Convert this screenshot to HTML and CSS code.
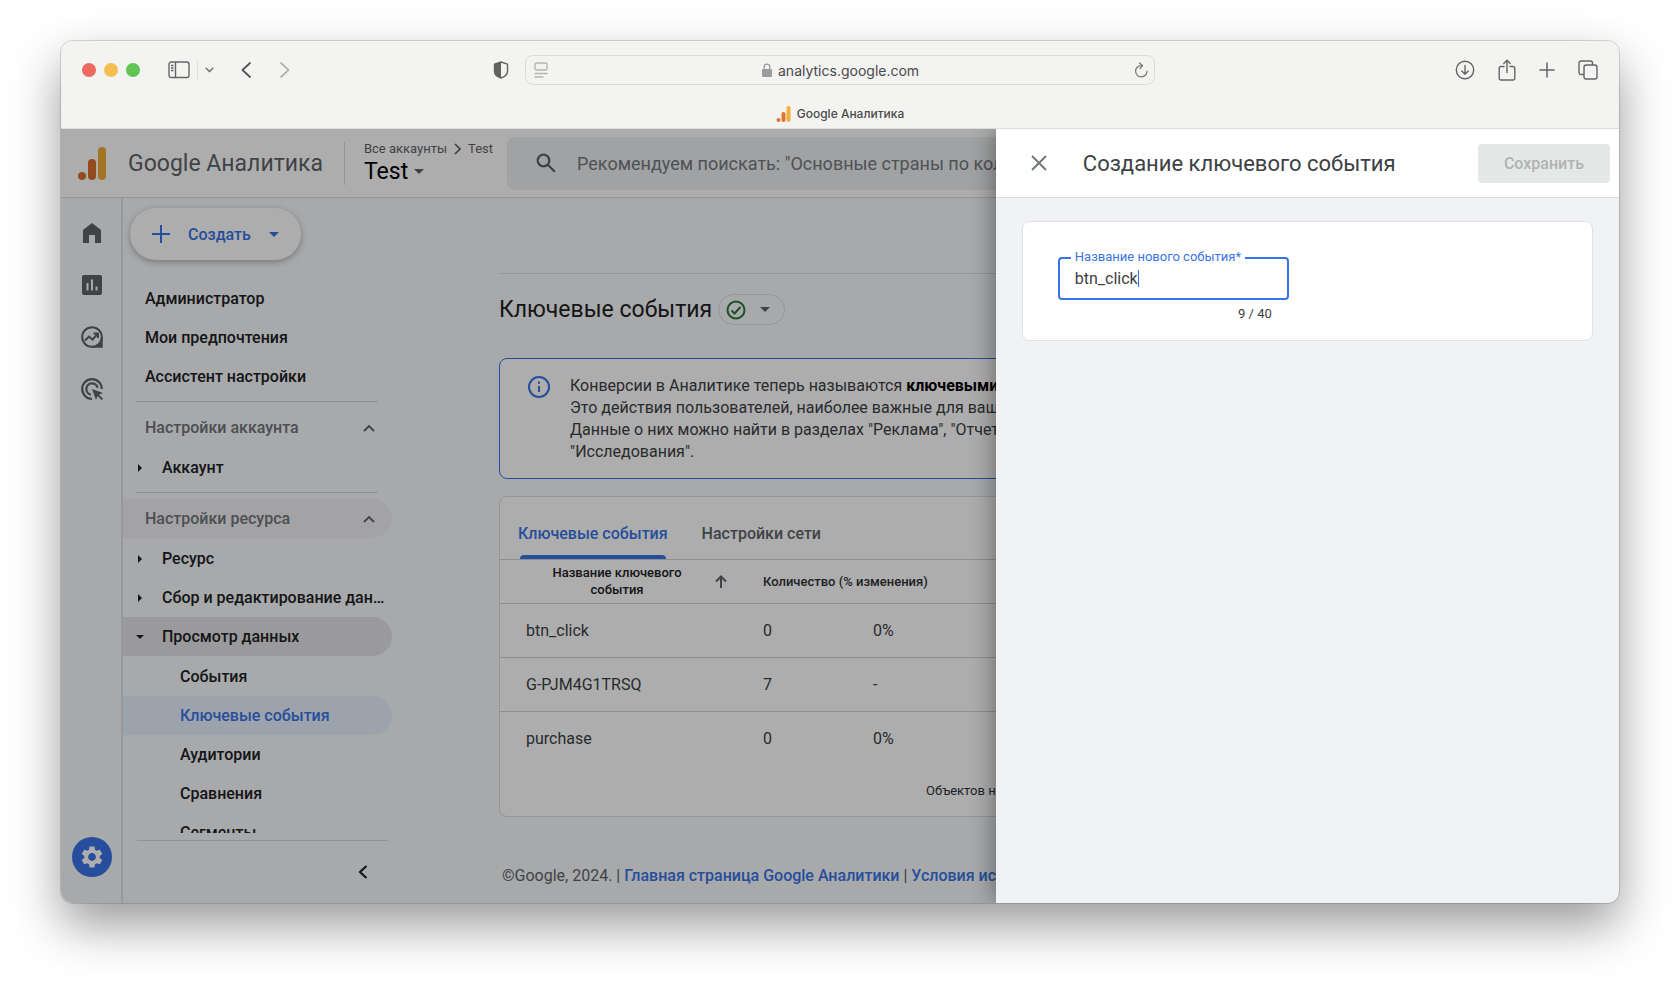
FILE: index.html
```
<!DOCTYPE html>
<html lang="ru">
<head>
    <meta charset="UTF-8">
    <meta name="viewport" content="width=device-width, initial-scale=1.0">
    <title>Google Аналитика</title>
    <link rel="stylesheet" href="styles.css">
</head>
<body>
    <div class="window">

        <!-- Browser toolbar -->
        <header class="browser">
            <div class="toolbar">
                <div class="toolbar-left">
                    <div class="lights">
                        <span class="light red"></span>
                        <span class="light yellow"></span>
                        <span class="light green"></span>
                    </div>
                    <button class="icon-btn" aria-label="Боковая панель">
                        <svg width="22" height="18" viewBox="0 0 22 18" fill="none" stroke="#656565" stroke-width="1.4"><rect x="1" y="1" width="20" height="15.5" rx="2.2"/><path d="M7.5 1v15.5M3 4.5h2.5M3 7h2.5M3 9.500h2.500" /></svg>
                    </button>
                    <span class="toolbar-sep"></span>
                    <button class="icon-btn chev" aria-label="Группы вкладок">
                        <svg width="9" height="6" viewBox="0 0 9 6" fill="none" stroke="#7a7a7a" stroke-width="1.6" stroke-linecap="round"><path d="M1.200 1.200l3.300 3.300 3.300-3.300"/></svg>
                    </button>
                    <button class="icon-btn back" aria-label="Назад">
                        <svg width="10" height="16" viewBox="0 0 10 16" fill="none" stroke="#555" stroke-width="1.8" stroke-linecap="round" stroke-linejoin="round"><path d="M9 1L1.500 8 9 15"/></svg>
                    </button>
                    <button class="icon-btn forward" aria-label="Вперед">
                        <svg width="10" height="16" viewBox="0 0 10 16" fill="none" stroke="#b4b4b2" stroke-width="1.8" stroke-linecap="round" stroke-linejoin="round"><path d="M1 1l7.500 7L1 15"/></svg>
                    </button>
                    <button class="icon-btn shield" aria-label="Конфиденциальность">
                        <svg width="16" height="18" viewBox="0 0 16 18"><path d="M8 1l6.500 2.200v7C14.500 13.500 11.500 15.800 8 17c-3.500-1.200-6.500-3.500-6.500-6.800v-7z" fill="none" stroke="#626260" stroke-width="1.400" stroke-linejoin="round"/><path d="M8 1v16c-3.500-1.200-6.500-3.500-6.500-6.800v-7z" fill="#626260"/></svg>
                    </button>
                </div>

                <div class="address">
                    <svg width="14" height="16" viewBox="0 0 14 16" fill="none" stroke="#b4b4b2" stroke-width="1.400" stroke-linecap="round"><rect x="1" y="1" width="12" height="7" rx="1.500"/><path d="M1 11.500h12M1 15h8"/></svg>
                    <div class="address-text">
                        <svg width="10" height="14" viewBox="0 0 10 14"><path d="M2.200 7V4a2.800 2.800 0 0 1 5.600 0v3" fill="none" stroke="#9b9b9b" stroke-width="1.300"/><rect y="6" width="10" height="8" rx="1.200" fill="#9b9b9b"/></svg>
                        <input type="text" class="address-input" value="analytics.google.com" aria-label="Адрес">
                    </div>
                    <button class="icon-btn" aria-label="Обновить">
                        <svg width="14" height="16" viewBox="0 0 14 16" fill="none" stroke="#777" stroke-width="1.200" stroke-linecap="round" stroke-linejoin="round"><path d="M7.500 3.500a5.700 5.700 0 1 0 5.500 5.700M5.500 1l3 2.500L6 6.500"/></svg>
                    </button>
                </div>

                <div class="toolbar-right">
                    <button class="icon-btn" aria-label="Загрузки">
                        <svg width="20" height="20" viewBox="0 0 20 20" fill="none" stroke="#656565" stroke-width="1.400" stroke-linecap="round" stroke-linejoin="round"><circle cx="10" cy="10" r="8.700"/><path d="M10 5.500v8.500M6.800 11l3.200 3.200 3.200-3.200"/></svg>
                    </button>
                    <button class="icon-btn" aria-label="Поделиться">
                        <svg width="18" height="22" viewBox="0 0 18 22" fill="none" stroke="#656565" stroke-width="1.400" stroke-linecap="round" stroke-linejoin="round"><path d="M6 7.500H3A1.800 1.800 0 0 0 1.200 9.300v9.900A1.800 1.800 0 0 0 3 21h12a1.800 1.800 0 0 0 1.800-1.800V9.300A1.800 1.800 0 0 0 15 7.500h-3M9 13.500V1.500M5.800 4.500L9 1.300l3.200 3.200"/></svg>
                    </button>
                    <button class="icon-btn" aria-label="Новая вкладка">
                        <svg width="16" height="16" viewBox="0 0 16 16" fill="none" stroke="#656565" stroke-width="1.500" stroke-linecap="round"><path d="M8 1v14M1 8h14"/></svg>
                    </button>
                    <button class="icon-btn" aria-label="Обзор вкладок">
                        <svg width="20" height="20" viewBox="0 0 20 20" fill="none" stroke="#656565" stroke-width="1.400"><rect x="6" y="5" width="13" height="14" rx="2.200"/><path d="M6 14.500H3A2 2 0 0 1 1 12.500V3a2 2 0 0 1 2-2h9.500a2 2 0 0 1 2 2v2"/></svg>
                    </button>
                </div>
            </div>
            <div class="tab-bar">
                <svg width="15" height="16" viewBox="0 0 28 32"><rect x="20" width="8" height="32" rx="4" fill="#f2b03d"/><rect x="10" y="12" width="8" height="20" rx="4" fill="#dd7633"/><circle cx="4" cy="28" r="4" fill="#dd7633"/></svg>
                <span>Google Аналитика</span>
            </div>
        </header>

        <div class="app">
            <header class="app-header">
                <svg class="logo" width="28" height="33" viewBox="0 0 28 33"><rect x="20" width="8" height="33" rx="4" fill="#f2ab36"/><rect x="10" y="12" width="8" height="21" rx="4" fill="#d9702c"/><circle cx="4" cy="29" r="4" fill="#d9702c"/></svg>
                <span class="brand">Google Аналитика</span>
                <div class="account">
                    <div class="crumbs">
                        <span>Все аккаунты</span>
                        <svg width="7" height="12" viewBox="0 0 7 12" fill="none" stroke="#5f6368" stroke-width="1.700"><path d="M1 1l5 5-5 5"/></svg>
                        <span>Test</span>
                    </div>
                    <button class="account-btn">Test <span class="caret"></span></button>
                </div>
                <label class="search">
                    <svg width="20" height="20" viewBox="0 0 20 20" fill="none" stroke="#5f6368" stroke-width="2.300"><circle cx="7.500" cy="7.500" r="5.800"/><path d="M11.800 11.800l7 7"/></svg>
                    <input type="text" aria-label="Поиск" placeholder="Рекомендуем поискать: &quot;Основные страны по количеству пользователей&quot;">
                </label>
            </header>

            <div class="app-body">
                <nav class="rail">
                    <a href="#" aria-label="Главная"><svg width="18" height="20" viewBox="0 0 18 20"><path d="M0 20V7l9-7 9 7v13h-6v-8H6v8z" fill="#5f6368"/></svg></a>
                    <a href="#" aria-label="Отчеты"><svg width="20" height="20" viewBox="0 0 20 20"><rect width="20" height="20" rx="2" fill="#5f6368"/><path d="M5.500 8v7.500M10 4.500v11M14.500 11.500v4" stroke="#f7f9fb" stroke-width="2"/></svg></a>
                    <a href="#" aria-label="Исследования"><svg width="22" height="22" viewBox="0 0 22 22" fill="none" stroke="#5f6368" stroke-width="2"><circle cx="11" cy="11" r="9.800"/><path d="M4 14.500l4-4 3.500 3 5-5.500M12.500 7.500H17V12"/><path d="M21 11v10H11c5.500 0 10-4.500 10-10z" fill="#5f6368" stroke-width="1.500"/></svg></a>
                    <a href="#" aria-label="Реклама"><svg width="22" height="22" viewBox="0 0 22 22" fill="none" stroke="#5f6368" stroke-width="2.200"><path d="M20.800 11A9.800 9.800 0 1 0 11 20.800M16.600 9.800A5.700 5.700 0 1 0 9.800 16.600"/><path d="M11 11l11 4-4 1.700 4 4-1.400 1.400-4-4L15 22z" fill="#5f6368" stroke="none"/></svg></a>
                    <a href="#" class="rail-settings" aria-label="Администратор"><svg width="26" height="26" viewBox="0 0 24 24" fill="#fff"><path d="M19.140 12.940c.04-.3.060-.61.060-.94 0-.32-.02-.64-.07-.94l2.030-1.580c.18-.14.23-.41.12-.61l-1.920-3.320c-.12-.22-.37-.29-.59-.22l-2.390.96c-.5-.38-1.030-.7-1.620-.94l-.36-2.540c-.04-.24-.24-.41-.48-.41h-3.840c-.24 0-.43.17-.47.41l-.36 2.540c-.59.24-1.130.57-1.620.94l-2.390-.96c-.22-.08-.47 0-.59.22L2.740 8.870c-.12.21-.08.47.12.61l2.030 1.580c-.05.3-.09.63-.09.94s.02.64.07.94l-2.030 1.580c-.18.14-.23.41-.12.61l1.920 3.320c.12.22.37.29.59.22l2.390-.96c.5.38 1.030.7 1.620.94l.36 2.540c.05.24.24.41.48.41h3.840c.24 0 .44-.17.47-.41l.36-2.540c.59-.24 1.130-.56 1.620-.94l2.390.96c.22.08.47 0 .59-.22l1.920-3.320c.12-.22.07-.47-.12-.61l-2.010-1.580zM12 15.600c-1.980 0-3.600-1.620-3.600-3.600s1.620-3.600 3.600-3.600 3.600 1.620 3.600 3.600-1.620 3.600-3.600 3.600z"/></svg></a>
                </nav>

                <aside class="sidebar">
                    <button class="create-btn">
                        <svg width="18" height="18" viewBox="0 0 18 18" stroke="#3974e6" stroke-width="2"><path d="M9 0v18M0 9h18"/></svg>
                        Создать
                        <span class="caret"></span>
                    </button>
                    <div class="menu">
                        <a href="#" class="row">Администратор</a>
                        <a href="#" class="row">Мои предпочтения</a>
                        <a href="#" class="row">Ассистент настройки</a>
                        <hr>
                        <button class="row row-head">Настройки аккаунта <svg width="12" height="8" viewBox="0 0 12 8" fill="none" stroke="#5f6368" stroke-width="1.800"><path d="M1 7l5-5 5 5"/></svg></button>
                        <a href="#" class="row row-group"><span class="arrow"></span><span class="row-text">Аккаунт</span></a>
                        <hr>
                        <button class="row row-head shaded">Настройки ресурса <svg width="12" height="8" viewBox="0 0 12 8" fill="none" stroke="#5f6368" stroke-width="1.800"><path d="M1 7l5-5 5 5"/></svg></button>
                        <a href="#" class="row row-group"><span class="arrow"></span><span class="row-text">Ресурс</span></a>
                        <a href="#" class="row row-group"><span class="arrow"></span><span class="row-text">Сбор и редактирование данных</span></a>
                        <a href="#" class="row row-group open"><span class="arrow"></span><span class="row-text">Просмотр данных</span></a>
                        <div class="submenu">
                            <a href="#" class="row">События</a>
                            <a href="#" class="row active">Ключевые события</a>
                            <a href="#" class="row">Аудитории</a>
                            <a href="#" class="row">Сравнения</a>
                            <a href="#" class="row">Сегменты</a>
                        </div>
                    </div>
                    <div class="sidebar-footer">
                        <button class="icon-btn" aria-label="Свернуть">
                            <svg width="10" height="14" viewBox="0 0 10 14" fill="none" stroke="#202124" stroke-width="2.200"><path d="M8.500 1L2 7l6.500 6"/></svg>
                        </button>
                    </div>
                </aside>

                <main class="content">
                    <div class="page-title">
                        <h1>Ключевые события</h1>
                        <button class="status-btn" aria-label="Статус">
                            <svg width="20" height="20" viewBox="0 0 20 20" fill="none" stroke="#2b773b" stroke-width="2"><circle cx="10" cy="10" r="8.500"/><path d="M5.500 10.500l3 3 6-6.500"/></svg>
                            <span class="caret"></span>
                        </button>
                    </div>

                    <div class="notice">
                        <svg width="24" height="24" viewBox="0 0 24 24" fill="none" stroke="#3974e6" stroke-width="2"><circle cx="12" cy="12" r="10"/><path d="M12 11v6M12 6.500v2.200"/></svg>
                        <p>Конверсии в Аналитике теперь называются <b>ключевыми событиями</b>.<br>
                        Это действия пользователей, наиболее важные для вашего бизнеса.<br>
                        Данные о них можно найти в разделах "Реклама", "Отчеты" и<br>
                        "Исследования".</p>
                    </div>

                    <section class="card">
                        <div class="tabs">
                            <button class="tab active">Ключевые события</button>
                            <button class="tab">Настройки сети</button>
                        </div>
                        <table>
                            <thead>
                                <tr>
                                    <th class="col-name">
                                        <div class="sort">
                                            <span>Название ключевого события</span>
                                            <svg width="12" height="13" viewBox="0 0 12 13" fill="none" stroke="#5f6368" stroke-width="2"><path d="M6 13V2M1 6.500l5-5 5 5"/></svg>
                                        </div>
                                    </th>
                                    <th colspan="2">Количество (% изменения)</th>
                                </tr>
                            </thead>
                            <tbody>
                                <tr><td>btn_click</td><td class="col-count">0</td><td>0%</td></tr>
                                <tr><td>G-PJM4G1TRSQ</td><td class="col-count">7</td><td>-</td></tr>
                                <tr><td>purchase</td><td class="col-count">0</td><td>0%</td></tr>
                            </tbody>
                        </table>
                        <div class="pager">Объектов на странице:</div>
                    </section>

                    <footer class="page-footer">
                        <span>©Google, 2024.</span> | <a href="#">Главная страница Google Аналитики</a> | <a href="#">Условия использования</a>
                    </footer>
                </main>
            </div>

            <div class="scrim"></div>

            <!-- Side sheet -->
            <div class="drawer" role="dialog" aria-labelledby="drawerTitle">
                <div class="drawer-header">
                    <button class="icon-btn" aria-label="Закрыть">
                        <svg width="16" height="16" viewBox="0 0 16 16" fill="none" stroke="#747779" stroke-width="2"><path d="M1 1l14 14M15 1L1 15"/></svg>
                    </button>
                    <h2 id="drawerTitle">Создание ключевого события</h2>
                    <button class="save-btn" disabled>Сохранить</button>
                </div>
                <div class="drawer-body">
                    <div class="form-card">
                        <div class="field">
                            <label for="eventName">Название нового события*</label>
                            <input type="text" id="eventName" value="btn_click" maxlength="40">
                            <span class="cursor"></span>
                        </div>
                        <div class="counter">9 / 40</div>
                    </div>
                </div>
            </div>
        </div>
    </div>
</body>
</html>
```
FILE: styles.css
```
* {
    margin: 0;
    padding: 0;
    box-sizing: border-box;
}

body {
    height: 100vh;
    padding: 41px 61px 81px;
    background: #fff;
    font-family: Roboto, sans-serif;
    font-size: 16px;
    color: #3c4043;
    overflow: hidden;
}

button,
input {
    font: inherit;
    color: inherit;
    background: none;
    border: none;
    outline: none;
}

button {
    cursor: pointer;
}

a {
    color: inherit;
    text-decoration: none;
}

svg {
    display: block;
    flex-shrink: 0;
}

.window {
    height: 100%;
    display: flex;
    flex-direction: column;
    border-radius: 12px;
    overflow: hidden;
    box-shadow: 0 0 0 1px rgba(0, 0, 0, 0.14), 0 22px 50px rgba(0, 0, 0, 0.4);
}

.icon-btn {
    display: flex;
    align-items: center;
    justify-content: center;
}

.caret {
    display: inline-block;
    border: 5px solid transparent;
    border-top-color: currentColor;
    border-bottom: none;
}

/* Browser */
.browser {
    flex-shrink: 0;
    background: #f3f3f1;
    border-bottom: 1px solid #dcdcda;
    font-family: Inter, sans-serif;
    color: #4a4a4a;
}

.toolbar {
    height: 58px;
    display: grid;
    grid-template-columns: 1fr 630px 1fr;
    align-items: center;
}

.toolbar-left {
    display: flex;
    align-items: center;
    padding: 0 16px 0 21px;
}

.lights {
    display: flex;
    gap: 8px;
    margin-right: 28px;
}

.light {
    width: 14px;
    height: 14px;
    border-radius: 50%;
}

.red { background: #ed6a5e; }
.yellow { background: #f4bf4f; }
.green { background: #61c554; }

.toolbar-sep {
    width: 1px;
    height: 20px;
    margin: 0 7px;
    background: #e0e0de;
}

.back {
    margin-left: 27px;
}

.forward {
    margin-left: 29px;
}

.shield {
    margin-left: auto;
}

.address {
    height: 30px;
    display: flex;
    align-items: center;
    justify-content: space-between;
    padding: 0 6px 0 8px;
    border: 1px solid #dbdbd9;
    border-radius: 8px;
}

.address-text {
    display: flex;
    align-items: center;
    gap: 6px;
}

.address-input {
    width: 142px;
    font-size: 14px;
}

.toolbar-right {
    display: flex;
    align-items: center;
    justify-content: flex-end;
    gap: 23px;
    padding-right: 21px;
}

.tab-bar {
    height: 29px;
    display: flex;
    align-items: center;
    justify-content: center;
    gap: 6px;
    font-size: 12px;
    font-weight: 500;
}

/* App */
.app {
    position: relative;
    flex: 1;
    min-height: 0;
    display: flex;
    flex-direction: column;
    background: #f7f9fb;
}

.app-header {
    height: 69px;
    flex-shrink: 0;
    display: flex;
    align-items: center;
    padding-left: 17px;
    background: #fff;
    border-bottom: 1px solid #dadce0;
}

.brand {
    margin: 0 21px 0 22px;
    font-size: 23px;
    color: #5f6368;
    white-space: nowrap;
}

.account {
    padding-left: 19px;
    border-left: 1px solid #dadce0;
    margin-right: 14px;
    white-space: nowrap;
}

.crumbs {
    display: flex;
    align-items: center;
    gap: 7px;
    font-size: 13px;
    line-height: 14px;
    color: #5f6368;
}

.account-btn {
    display: flex;
    align-items: center;
    gap: 6px;
    margin-top: 3px;
    font-size: 23px;
    line-height: 26px;
    color: #000;
}

.account-btn .caret {
    color: #5f6368;
}

.search {
    flex: 1;
    height: 53px;
    display: flex;
    align-items: center;
    gap: 21px;
    padding-left: 29px;
    border-radius: 8px;
    background: #edeff1;
}

.search input {
    flex: 1;
    font-size: 18px;
    color: #5f6368;
}

.search input::placeholder {
    color: #75797e;
    opacity: 1;
}

.app-body {
    flex: 1;
    min-height: 0;
    display: flex;
}

.rail {
    width: 62px;
    flex-shrink: 0;
    display: flex;
    flex-direction: column;
    align-items: center;
    padding: 15px 0 26px 1px;
    gap: 12px;
    border-right: 2px solid #dfe1e4;
}

.rail a {
    width: 40px;
    height: 40px;
    display: flex;
    align-items: center;
    justify-content: center;
}

.rail .rail-settings {
    margin-top: auto;
    border-radius: 50%;
    background: #3974e6;
}

.sidebar {
    width: 269px;
    flex-shrink: 0;
    display: flex;
    flex-direction: column;
}

.create-btn {
    align-self: flex-start;
    flex-shrink: 0;
    height: 52px;
    display: flex;
    align-items: center;
    gap: 18px;
    margin: 10px 0 19px 7px;
    padding: 0 22px;
    border-radius: 26px;
    background: #fff;
    box-shadow: 0 2px 6px rgba(60, 64, 67, 0.4);
    font-weight: 500;
    color: #3974e6;
}

.menu {
    flex: 1;
    min-height: 0;
    overflow: hidden;
    font-weight: 500;
    color: #202124;
}

.menu hr {
    margin: 5px 14px 6px 13px;
    border: none;
    border-top: 1px solid #d6d8da;
}

.row {
    width: 100%;
    height: 39px;
    display: flex;
    align-items: center;
    padding-left: 22px;
    border-radius: 0 20px 20px 0;
    white-space: nowrap;
}

.row-head {
    justify-content: space-between;
    padding-right: 17px;
    margin-bottom: 1px;
    color: #70757a;
}

.shaded {
    background: #f0f1f3;
}

.row-group {
    padding: 0 5px 0 13px;
}

.row-text {
    overflow: hidden;
    text-overflow: ellipsis;
}

.arrow {
    width: 8px;
    margin-right: 18px;
    flex-shrink: 0;
}

.arrow::before {
    content: "";
    display: block;
    width: 0;
    margin-left: 2px;
    border: 4px solid transparent;
    border-left-color: #202124;
    border-right: none;
}

.open {
    background: #e3e4e6;
}

.open .arrow::before {
    margin-left: 0;
    border: 4px solid transparent;
    border-top-color: #202124;
    border-bottom: none;
}

.submenu {
    margin-top: 1px;
}

.submenu .row {
    padding-left: 57px;
}

.row.active {
    background: #e8f0fe;
    color: #3974e6;
}

.sidebar-footer {
    height: 63px;
    flex-shrink: 0;
    display: flex;
    align-items: center;
    justify-content: flex-end;
    margin: 7px 4px 0 14px;
    padding-right: 20px;
    border-top: 1px solid #d6d8da;
}

/* Content */
.content {
    flex: 1;
    padding: 75px 107px 0;
    white-space: nowrap;
}

.page-title {
    height: 72px;
    display: flex;
    align-items: center;
    gap: 6px;
    border-top: 1px solid #dadce0;
}

.page-title h1 {
    font-size: 23px;
    font-weight: 400;
    color: #202124;
}

.status-btn {
    height: 31px;
    display: flex;
    align-items: center;
    gap: 14px;
    padding: 0 14px 0 7px;
    border: 1px solid #dadce0;
    border-radius: 16px;
    color: #5f6368;
}

.notice {
    display: flex;
    gap: 19px;
    margin-top: 13px;
    padding: 16px 27px 15px;
    border: 1px solid #3974e6;
    border-radius: 8px;
    background: #fff;
}

.notice p {
    line-height: 22px;
}

.notice b {
    color: #000;
}

.card {
    margin-top: 17px;
    border: 1px solid #dadce0;
    border-radius: 8px;
    background: #fff;
}

.tabs {
    height: 63px;
    display: flex;
    padding-left: 18px;
    gap: 34px;
    border-bottom: 1px solid #d0d2d5;
}

.tab {
    position: relative;
    padding-top: 10px;
    font-weight: 500;
    color: #5f6368;
}

.tab.active {
    color: #3974e6;
}

.tab.active::after {
    content: "";
    position: absolute;
    left: 2px;
    right: 2px;
    bottom: 0;
    height: 4px;
    border-radius: 4px 4px 0 0;
    background: #3974e6;
}

table {
    width: 100%;
    border-collapse: collapse;
}

th {
    height: 43px;
    font-size: 13px;
    font-weight: 500;
    line-height: 17px;
    text-align: left;
    color: #303236;
}

td {
    height: 54px;
    border-top: 1px solid #d0d2d5;
}

td:first-child {
    padding-left: 26px;
}

.col-name {
    width: 263px;
    white-space: normal;
    color: #202124;
}

.col-count {
    width: 110px;
}

.sort {
    display: flex;
    align-items: center;
    justify-content: space-between;
    padding: 0 36px 0 45px;
}

.sort span {
    width: 144px;
    text-align: center;
}

.pager {
    padding: 17px 0 16px 426px;
    font-size: 13px;
    line-height: 18px;
    color: #303236;
}

.page-footer {
    margin-top: 48px;
    padding-left: 3px;
    line-height: 22px;
    color: #5f6368;
}

.page-footer a {
    font-weight: 500;
    color: #3974e6;
}

/* Drawer */
.scrim {
    position: absolute;
    inset: 0;
    background: rgba(0, 0, 0, 0.32);
}

.drawer {
    position: absolute;
    top: 0;
    right: 0;
    bottom: 0;
    width: 40%;
    display: flex;
    flex-direction: column;
    background: #f1f2f4;
    box-shadow: 0 0 24px rgba(0, 0, 0, 0.45);
    clip-path: inset(0 0 0 -40px);
}

.drawer-header {
    height: 69px;
    flex-shrink: 0;
    display: flex;
    align-items: center;
    padding: 0 9px 0 35px;
    background: #fff;
    border-bottom: 1px solid #dadce0;
}

.drawer-header h2 {
    flex: 1;
    margin-left: 36px;
    font-size: 22px;
    font-weight: 400;
    color: #3c4043;
}

.save-btn {
    height: 39px;
    padding: 0 26px;
    border-radius: 4px;
    background: #e6e8e8;
    font-weight: 500;
    color: #b0b3b3;
}

.drawer-body {
    padding: 23px 26px;
}

.form-card {
    padding: 35px 35px 17px;
    border: 1px solid #e0e2e5;
    border-radius: 8px;
    background: #fff;
}

.field {
    position: relative;
    width: 231px;
}

.field label {
    position: absolute;
    top: -8px;
    left: 13px;
    padding: 0 4px;
    background: #fff;
    font-size: 13px;
    line-height: 16px;
    color: #3974e6;
}

.field input {
    display: block;
    width: 100%;
    height: 43px;
    padding: 0 15px;
    border: 2px solid #3974e6;
    border-radius: 4px;
}

.cursor {
    position: absolute;
    top: 13px;
    left: 80px;
    width: 1px;
    height: 17px;
    background: #3974e6;
}

.counter {
    width: 231px;
    margin-top: 5px;
    padding-right: 17px;
    text-align: right;
    font-size: 13px;
    line-height: 18px;
}
```
